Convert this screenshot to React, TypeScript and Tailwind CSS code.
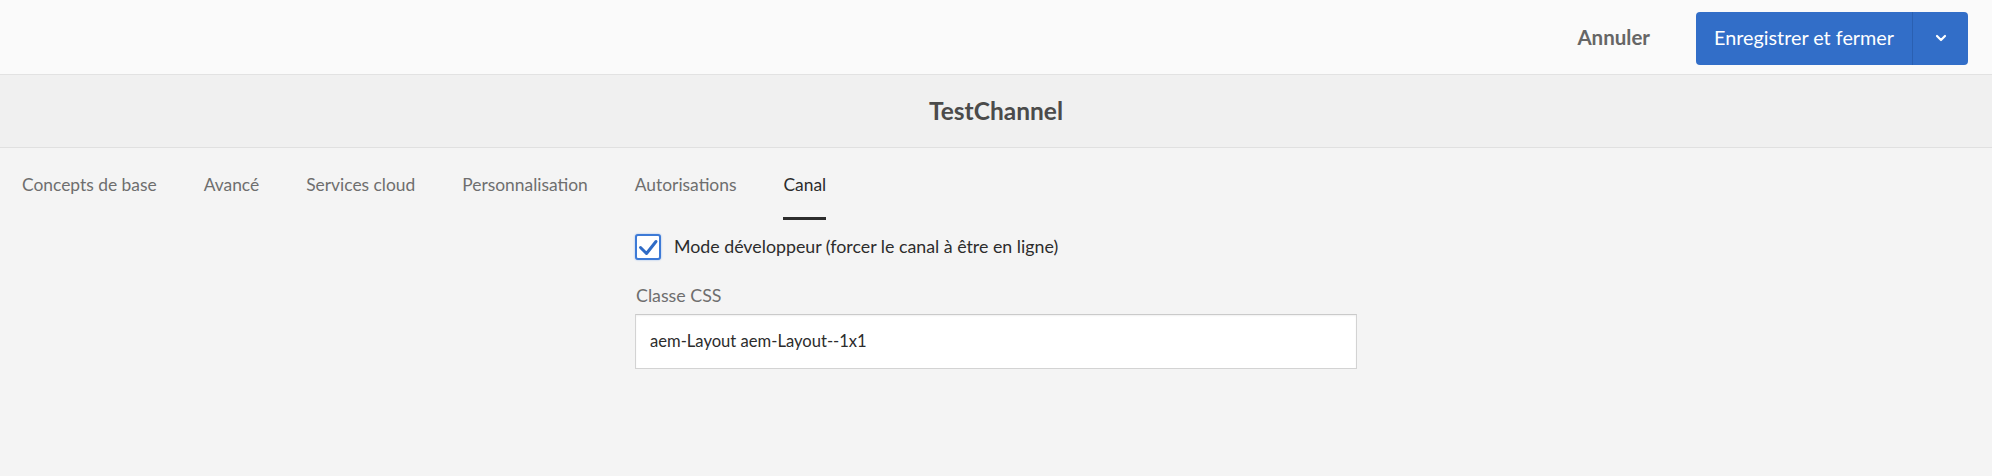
import React from "react";

const tabs = ["Concepts de base", "Avancé", "Services cloud", "Personnalisation", "Autorisations", "Canal"];

export default function App() {
  return (
    <div className="w-[1992px] h-[476px] bg-[#f4f4f4] flex flex-col" style={{ fontFamily: "Lato, 'Open Sans', sans-serif" }}>
      <header className="h-[75px] shrink-0 bg-[#fafafa] border-b border-[#e2e2e2] flex items-center justify-end pr-[24px]">
        <button className="text-[20.5px] font-bold text-[#666666] mr-[46px] mt-[1px]">Annuler</button>
        <div className="flex h-[53px] rounded-[4px] bg-[#326ec8] text-white mt-[2px]">
          <button className="w-[217px] h-full text-[19.8px] flex items-center justify-center border-r border-[#2a60b2]">
            Enregistrer et fermer
          </button>
          <button className="w-[55px] h-full flex items-center justify-center">
            <svg width="12" height="8" viewBox="0 0 12 8" fill="none">
              <path d="M2 2l4 4 4-4" stroke="white" strokeWidth="2.2" strokeLinecap="round" strokeLinejoin="round" />
            </svg>
          </button>
        </div>
      </header>
      <div className="h-[73px] shrink-0 bg-[#f0f0f0] border-b border-[#e0e0e0] flex items-center justify-center">
        <h1 className="text-[24.5px] font-bold text-[#4b4b4b]">TestChannel</h1>
      </div>
      <nav className="flex gap-[47px] pl-[22px] h-[72px] shrink-0">
        {tabs.map((t) => (
          <div
            key={t}
            className={
              t === "Canal"
                ? "h-[72px] pt-[5px] flex items-center border-b-[3px] border-[#2c2c2c] text-[17.4px] text-[#2c2c2c]"
                : "h-[72px] pt-[5px] flex items-center border-b-[3px] border-transparent text-[17.4px] text-[#6e6e6e]"
            }
          >
            {t}
          </div>
        ))}
      </nav>
      <div className="pl-[635px] pt-[14px] flex flex-col">
        <label className="flex items-center gap-[13px] h-[26px]">
          <span className="w-[26px] h-[26px] rounded-[3px] border-2 border-[#3d7ad6] bg-white flex items-center justify-center shadow-[0_0_2px_#8fb4ea]">
            <svg width="22" height="22" viewBox="0 0 22 22" fill="none">
              <path d="M3.5 11.5l6 6 9.5-12" stroke="#2f6bc6" strokeWidth="3" strokeLinecap="round" strokeLinejoin="round" />
            </svg>
          </span>
          <span className="text-[17.8px] text-[#2c2c2c] leading-none">Mode développeur (forcer le canal à être en ligne)</span>
        </label>
        <div className="mt-[22px] text-[17.8px] text-[#6e6e6e] pl-[1px]">Classe CSS</div>
        <div className="mt-[5px] w-[722px] h-[55px] bg-white border border-[#d3d3d3] border-t-[#cacaca] shadow-[inset_0_1px_2px_rgba(0,0,0,0.06)] flex items-center pl-[14px] text-[16.6px] text-[#2c2c2c]">
          aem-Layout aem-Layout--1x1
        </div>
      </div>
    </div>
  );
}
